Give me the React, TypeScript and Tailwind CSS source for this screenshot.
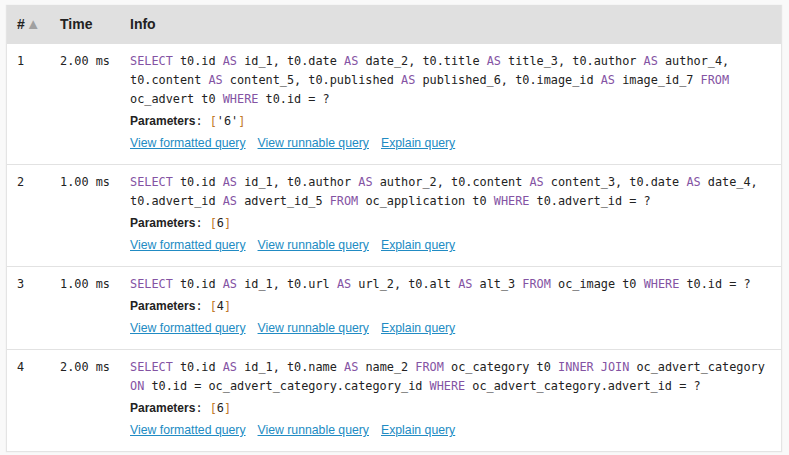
const KEYWORDS = new Set(["SELECT", "AS", "FROM", "WHERE", "INNER", "JOIN", "ON"])

interface Query {
  n: number
  time: string
  sql: string[]
  params: string
}

const QUERIES: Query[] = [
  {
    n: 1,
    time: "2.00 ms",
    sql: [
      "SELECT t0.id AS id_1, t0.date AS date_2, t0.title AS title_3, t0.author AS author_4,",
      "t0.content AS content_5, t0.published AS published_6, t0.image_id AS image_id_7 FROM",
      "oc_advert t0 WHERE t0.id = ?",
    ],
    params: "'6'",
  },
  {
    n: 2,
    time: "1.00 ms",
    sql: [
      "SELECT t0.id AS id_1, t0.author AS author_2, t0.content AS content_3, t0.date AS date_4,",
      "t0.advert_id AS advert_id_5 FROM oc_application t0 WHERE t0.advert_id = ?",
    ],
    params: "6",
  },
  {
    n: 3,
    time: "1.00 ms",
    sql: ["SELECT t0.id AS id_1, t0.url AS url_2, t0.alt AS alt_3 FROM oc_image t0 WHERE t0.id = ?"],
    params: "4",
  },
  {
    n: 4,
    time: "2.00 ms",
    sql: [
      "SELECT t0.id AS id_1, t0.name AS name_2 FROM oc_category t0 INNER JOIN oc_advert_category",
      "ON t0.id = oc_advert_category.category_id WHERE oc_advert_category.advert_id = ?",
    ],
    params: "6",
  },
]

const mono = "font-['DejaVu_Sans_Mono',monospace] text-[11.85px]"

function SqlLine({ line }: { line: string }) {
  const words = line.split(" ")
  return (
    <div className="h-[19px] leading-[19px] whitespace-pre">
      {words.map((w, i) => (
        <span key={i}>
          {KEYWORDS.has(w) ? <span className="text-[#8453a3]">{w}</span> : w}
          {i < words.length - 1 ? " " : ""}
        </span>
      ))}
    </div>
  )
}

export default function App() {
  return (
    <div className="min-h-[455px] bg-[#f9f9f9] pt-[5px] font-['Liberation_Sans',Arial,sans-serif] text-[#222]">
      <div className="ml-[6px] w-[776px] bg-white border border-[#e4e4e4] border-t-0 shadow-[0_0_1px_rgba(128,128,128,0.2)]">
        <div className="grid grid-cols-[43px_70px_1fr] h-[38px] items-center bg-[#e0e0e0] text-[14px] font-bold">
          <div className="pl-[10px] flex items-center">
            #<span className="text-[#a0a0a0] text-[15px] ml-[1px]">▲</span>
          </div>
          <div className="pl-[10px]">Time</div>
          <div className="pl-[10px]">Info</div>
        </div>
        {QUERIES.map((q, idx) => (
          <div
            key={q.n}
            className={`grid grid-cols-[43px_70px_1fr] border-t ${idx === 0 ? "border-[#e0e0e0]" : "border-[#e2e2e2]"} pt-[8px] pb-[11px]`}
          >
            <div className={`pl-[10px] leading-[19px] ${mono}`}>{q.n}</div>
            <div className={`pl-[10px] leading-[19px] whitespace-nowrap ${mono}`}>{q.time}</div>
            <div className="pl-[10px]">
              <div className={mono}>
                {q.sql.map((l, i) => (
                  <SqlLine key={i} line={l} />
                ))}
              </div>
              <div className="mt-[3px] h-[19px] leading-[19px] flex items-baseline">
                <strong className="text-[12px] font-bold">Parameters</strong>
                <span className={`${mono} whitespace-pre`}>
                  {": "}
                  <span className="text-[#c0782a]">[</span>
                  {q.params}
                  <span className="text-[#c0782a]">]</span>
                </span>
              </div>
              <div className="mt-[3px] h-[19px] leading-[19px] flex gap-[12px] text-[12.25px] text-[#218bc3]">
                <a href="#" className="underline">View formatted query</a>
                <a href="#" className="underline">View runnable query</a>
                <a href="#" className="underline">Explain query</a>
              </div>
            </div>
          </div>
        ))}
      </div>
    </div>
  )
}
